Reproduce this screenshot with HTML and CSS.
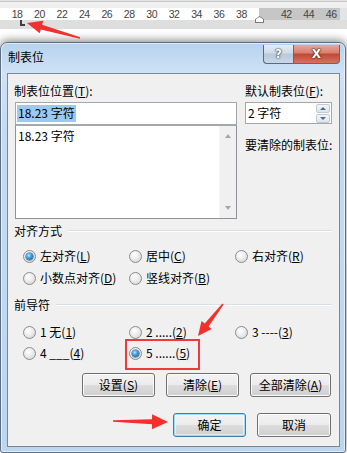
FILE: index.html
```html
<!DOCTYPE html>
<html lang="zh-CN">
<head>
<meta charset="utf-8">
<link rel="stylesheet" href="styles.css">
</head>
<body>
<div class="page">
  <div class="ruler-area">
    <div class="ruler-top"></div>
    <div class="ruler">
      <span>18</span><span>20</span><span>22</span><span>24</span><span>26</span><span>28</span><span>30</span><span>32</span><span>34</span><span>36</span><span>38</span><span></span><span>42</span><span>44</span><span>46</span>
    </div>
    <div class="ruler-bottom"></div>
  </div>
  <div class="indent-marker"></div>
  <div class="tab-marker"></div>

  <section class="dialog">
    <header class="titlebar">
      <span class="title">制表位</span>
      <div class="caption">
        <span class="cap help">?</span>
        <span class="cap close">X</span>
      </div>
    </header>
    <div class="client">
      <div class="top">
        <div class="col-left">
          <div class="label lab-left">制表位位置(<u>T</u>):</div>
          <div class="input"><span class="sel">18.23 字符</span></div>
          <div class="list">
            <div class="items"><div class="item">18.23 字符</div></div>
            <div class="scrollbar">
              <span class="sarrow up"></span>
              <span class="sarrow down"></span>
            </div>
          </div>
        </div>
        <div class="col-right">
          <div class="label">默认制表位(<u>F</u>):</div>
          <div class="spin">
            <span class="spin-text">2 字符</span>
            <div class="spin-btns">
              <span class="sbtn"><i class="tri up"></i></span>
              <span class="sbtn"><i class="tri down"></i></span>
            </div>
          </div>
          <div class="label clear-label">要清除的制表位:</div>
        </div>
      </div>

      <div class="group g-align">
        <div class="group-title"><span>对齐方式</span><i class="rule"></i></div>
        <div class="radios r-align">
          <div class="opt"><span class="radio on"></span><span class="txt">左对齐(<u>L</u>)</span></div>
          <div class="opt"><span class="radio"></span><span class="txt">居中(<u>C</u>)</span></div>
          <div class="opt"><span class="radio"></span><span class="txt">右对齐(<u>R</u>)</span></div>
          <div class="opt"><span class="radio"></span><span class="txt">小数点对齐(<u>D</u>)</span></div>
          <div class="opt"><span class="radio"></span><span class="txt">竖线对齐(<u>B</u>)</span></div>
        </div>
      </div>

      <div class="group g-leader">
        <div class="group-title"><span>前导符</span><i class="rule"></i></div>
        <div class="radios r-leader">
          <div class="opt"><span class="radio"></span><span class="txt">1 无(<u>1</u>)</span></div>
          <div class="opt"><span class="radio"></span><span class="txt">2 .....(<u>2</u>)</span></div>
          <div class="opt"><span class="radio"></span><span class="txt">3 ----(<u>3</u>)</span></div>
          <div class="opt"><span class="radio"></span><span class="txt">4 ___(<u>4</u>)</span></div>
          <div class="opt"><span class="radio on"></span><span class="txt">5 ......(<u>5</u>)</span></div>
        </div>
      </div>

      <div class="btn-row row1">
        <button class="btn w73">设置(<u>S</u>)</button>
        <button class="btn w73">清除(<u>E</u>)</button>
        <button class="btn w81">全部清除(<u>A</u>)</button>
      </div>
      <div class="btn-row row2">
        <button class="btn w73 default">确定</button>
        <button class="btn w74">取消</button>
      </div>
    </div>
  </section>

  <div class="highlight-box"></div>
  <svg class="marks" width="347" height="453" viewBox="0 0 347 453">
    <polygon points="80.2,37.2 42.1,24.7 43.2,20.8 27,23 39.7,33.3 40.8,29.5 79.8,38.8"/>
    <polygon points="223.6,304.5 208.6,326.5 211.7,329 198,336 201.5,321 204.7,323.4 222.4,303.5"/>
    <polygon points="113,420.2 152,419.2 152.1,414.2 168,422 151.9,429.2 152,424.2 113,421.8"/>
  </svg>
</div>
</body>
</html>
```

FILE: styles.css
```css
* { box-sizing: border-box; }
html, body { margin: 0; padding: 0; }
body {
  width: 347px;
  height: 453px;
  overflow: hidden;
  background: #ffffff;
  font-family: "Noto Sans CJK SC", "Noto Sans", sans-serif;
  font-size: 12px;
  color: #000;
}
.page {
  position: relative;
  width: 347px;
  height: 453px;
}

/* ruler */
.ruler-area {
  height: 42px;
  display: flex;
  flex-direction: column;
}
.ruler-top {
  height: 8px;
  background: #efefef;
  border-top: 1px solid #e2e2e2;
  box-shadow: inset 0 1px 0 #c9c9c9;
}
.ruler {
  height: 12px;
  display: grid;
  grid-template-columns: repeat(15, 22.45px);
  padding-left: 5.8px;
  background: linear-gradient(to right, #ffffff 0, #ffffff 259px, #c6c6c6 259px, #c6c6c6 340px, #e4e4e4 340px);
  font-family: "Liberation Sans", Arial, sans-serif;
  font-size: 10.5px;
  line-height: 12px;
  color: #444;
}
.ruler span {
  text-align: center;
  letter-spacing: -0.5px;
}
.ruler-bottom {
  height: 9px;
  background: #dedede;
}
.indent-marker {
  position: absolute;
  left: 255px;
  top: 16px;
  width: 9px;
  height: 7px;
  background: #7a7a7a;
  clip-path: polygon(50% 0, 100% 45%, 100% 100%, 0 100%, 0 45%);
}
.indent-marker::before {
  content: "";
  position: absolute;
  left: 1px;
  top: 1px;
  right: 1px;
  bottom: 1px;
  background: #fff;
  clip-path: polygon(50% 0, 100% 45%, 100% 100%, 0 100%, 0 45%);
}
.tab-marker {
  position: absolute;
  left: 20px;
  top: 20px;
  width: 5px;
  height: 6px;
  border-left: 2px solid #3f3f3f;
  border-bottom: 2px solid #3f3f3f;
}

/* dialog */
.dialog {
  width: 346px;
  height: 411px;
  border: 1px solid #5d6f82;
  border-radius: 7px 7px 3px 3px;
  padding: 0 5px 5px 6px;
  background: linear-gradient(to bottom, #b7d2ee 0, #cfe2f6 30px, #c4dbf2 90px, #bcd6f0 100%);
  box-shadow: 0 -2px 9px rgba(0,0,0,0.45), inset 0 0 0 1px rgba(255,255,255,0.55);
  display: flex;
  flex-direction: column;
}
.titlebar {
  height: 30px;
  display: flex;
  justify-content: space-between;
  align-items: flex-start;
}
.title {
  padding-left: 1px;
  margin-top: 6px;
  line-height: 16px;
  font-size: 12px;
  color: #000;
}
.caption {
  display: flex;
  margin-top: 2px;
  height: 19px;
}
.cap {
  display: flex;
  align-items: center;
  justify-content: center;
  height: 19px;
  font-family: "DejaVu Sans", sans-serif;
  font-weight: bold;
  color: #fff;
  border: 1px solid #5b6a7c;
  border-top: 0;
}
.cap.help {
  width: 30px;
  border-radius: 0 0 0 4px;
  border-right: 0;
  background: linear-gradient(to bottom, #e4ecf5 0, #cfdbe8 45%, #b8c8d9 50%, #c9d8e8 100%);
  font-size: 12px;
  text-shadow: 0 0 1px #3a4a5a, 0 0 1px #3a4a5a, 0 0 2px #3a4a5a;
}
.cap.close {
  width: 47px;
  border-radius: 0 0 4px 0;
  background: linear-gradient(to bottom, #e6a69a 0, #d77f70 45%, #c24632 50%, #d5735e 100%);
  font-size: 12px;
  text-shadow: 0 0 1px #4a1a12, 0 0 1px #4a1a12, 0 0 2px #4a1a12;
}

.client {
  height: 374px;
  border: 1px solid #7b8894;
  background: #f0f0f0;
  padding: 9px 7px 0 7px;
  display: flex;
  flex-direction: column;
}
.label {
  height: 16px;
  line-height: 16px;
  white-space: nowrap;
}
.lab-left { margin-left: -1px; }
.top {
  display: flex;
  gap: 8px;
}
.col-left {
  width: 222px;
  display: flex;
  flex-direction: column;
}
.col-right {
  width: 87px;
  display: flex;
  flex-direction: column;
}
.input {
  margin-top: 3px;
  height: 23px;
  border: 1px solid #a4a8ad;
  background: #fff;
  padding: 2px 0 0 1px;
  line-height: 16px;
}
.sel {
  background: #9bc9ef;
  padding: 0 1px 1px 1px;
  display: inline-block;
  height: 17px;
}
.list {
  height: 94px;
  border: 1px solid #8f9296;
  border-top-color: #a4a8ad;
  background: #fff;
  display: flex;
}
.items {
  flex: 1;
  padding: 2px 0 0 2px;
  line-height: 16px;
}
.scrollbar {
  width: 17px;
  background: #f0f0f0;
  border-left: 1px solid #f6f6f6;
  display: flex;
  flex-direction: column;
  justify-content: space-between;
  align-items: center;
  padding: 8px 0 8px 0;
}
.sarrow {
  width: 0;
  height: 0;
  border-left: 3.5px solid transparent;
  border-right: 3.5px solid transparent;
}
.sarrow.up { border-bottom: 4px solid #a6a6a6; }
.sarrow.down { border-top: 4px solid #a6a6a6; }

.spin {
  margin-top: 3px;
  height: 22px;
  border: 1px solid #a4a8ad;
  background: #fff;
  display: flex;
  justify-content: space-between;
}
.spin-text {
  padding: 2px 0 0 2px;
  line-height: 16px;
}
.spin-btns {
  width: 15px;
  padding: 1px 1px 0 0;
  display: flex;
  flex-direction: column;
  gap: 1px;
}
.sbtn {
  height: 9px;
  border: 1px solid #c3c9d1;
  border-radius: 2px;
  background: linear-gradient(to bottom, #f4f6f8, #dde3ea);
  display: flex;
  align-items: center;
  justify-content: center;
}
.tri {
  width: 0;
  height: 0;
  border-left: 3px solid transparent;
  border-right: 3px solid transparent;
}
.tri.up { border-bottom: 3px solid #4a6a90; }
.tri.down { border-top: 3px solid #4a6a90; }
.clear-label { margin-top: 13px; }

/* groups */
.group { display: flex; flex-direction: column; }
.g-align { margin-top: 4px; }
.g-leader { margin-top: 11px; }
.group-title {
  height: 16px;
  line-height: 16px;
  display: flex;
  align-items: center;
  margin-left: -1px;
}
.rule {
  flex: 1;
  margin-left: 6px;
  height: 2px;
  border-top: 1px solid #d5dfe5;
  border-bottom: 1px solid #ffffff;
}
.radios {
  display: grid;
  grid-template-columns: repeat(3, 106px);
  padding-left: 8px;
}
.r-align { margin-top: 9px; row-gap: 6px; }
.r-leader { margin-top: 11px; row-gap: 5px; }
.opt {
  height: 16px;
  line-height: 16px;
  display: flex;
  align-items: center;
  gap: 4px;
  white-space: nowrap;
}
.radio {
  width: 13px;
  height: 13px;
  border-radius: 50%;
  border: 1px solid #8d8d8d;
  background: radial-gradient(circle at 40% 35%, #ffffff 0, #ececec 45%, #cdcdcd 100%);
  display: flex;
  align-items: center;
  justify-content: center;
  flex: none;
}
.radio.on::after {
  content: "";
  width: 7px;
  height: 7px;
  border-radius: 50%;
  background: radial-gradient(circle at 40% 35%, #b9e8ff 0, #3c9ee0 40%, #15528c 100%);
  box-shadow: 0 0 0 0.5px #1d4f7e;
}

/* buttons */
.btn-row {
  display: flex;
  justify-content: flex-end;
  gap: 11px;
  padding-right: 1px;
}
.row1 { margin-top: 12px; }
.row2 { margin-top: 16px; }
.btn {
  height: 24px;
  padding: 0;
  border: 1px solid #707070;
  border-radius: 3px;
  background: linear-gradient(to bottom, #f3f3f3 0, #ebebeb 50%, #dddddd 50%, #cfcfcf 100%);
  box-shadow: inset 0 0 0 1px #fbfbfb;
  font-family: "Noto Sans CJK SC", "Noto Sans", sans-serif;
  font-size: 12px;
  line-height: 16px;
  color: #000;
}
.w73 { width: 73px; }
.w74 { width: 74px; }
.w81 { width: 81px; }
.btn.default {
  border-color: #3c7fb1;
  box-shadow: inset 0 0 0 1px #9ddcf8, inset 0 0 0 2px rgba(255,255,255,0.5);
}

/* annotations */
.highlight-box {
  position: absolute;
  left: 125px;
  top: 339px;
  width: 75px;
  height: 31px;
  border: 2px solid #ee3a3a;
}
.marks {
  position: absolute;
  left: 0;
  top: 0;
  pointer-events: none;
}
.marks polygon { fill: #f2302e; }
```
